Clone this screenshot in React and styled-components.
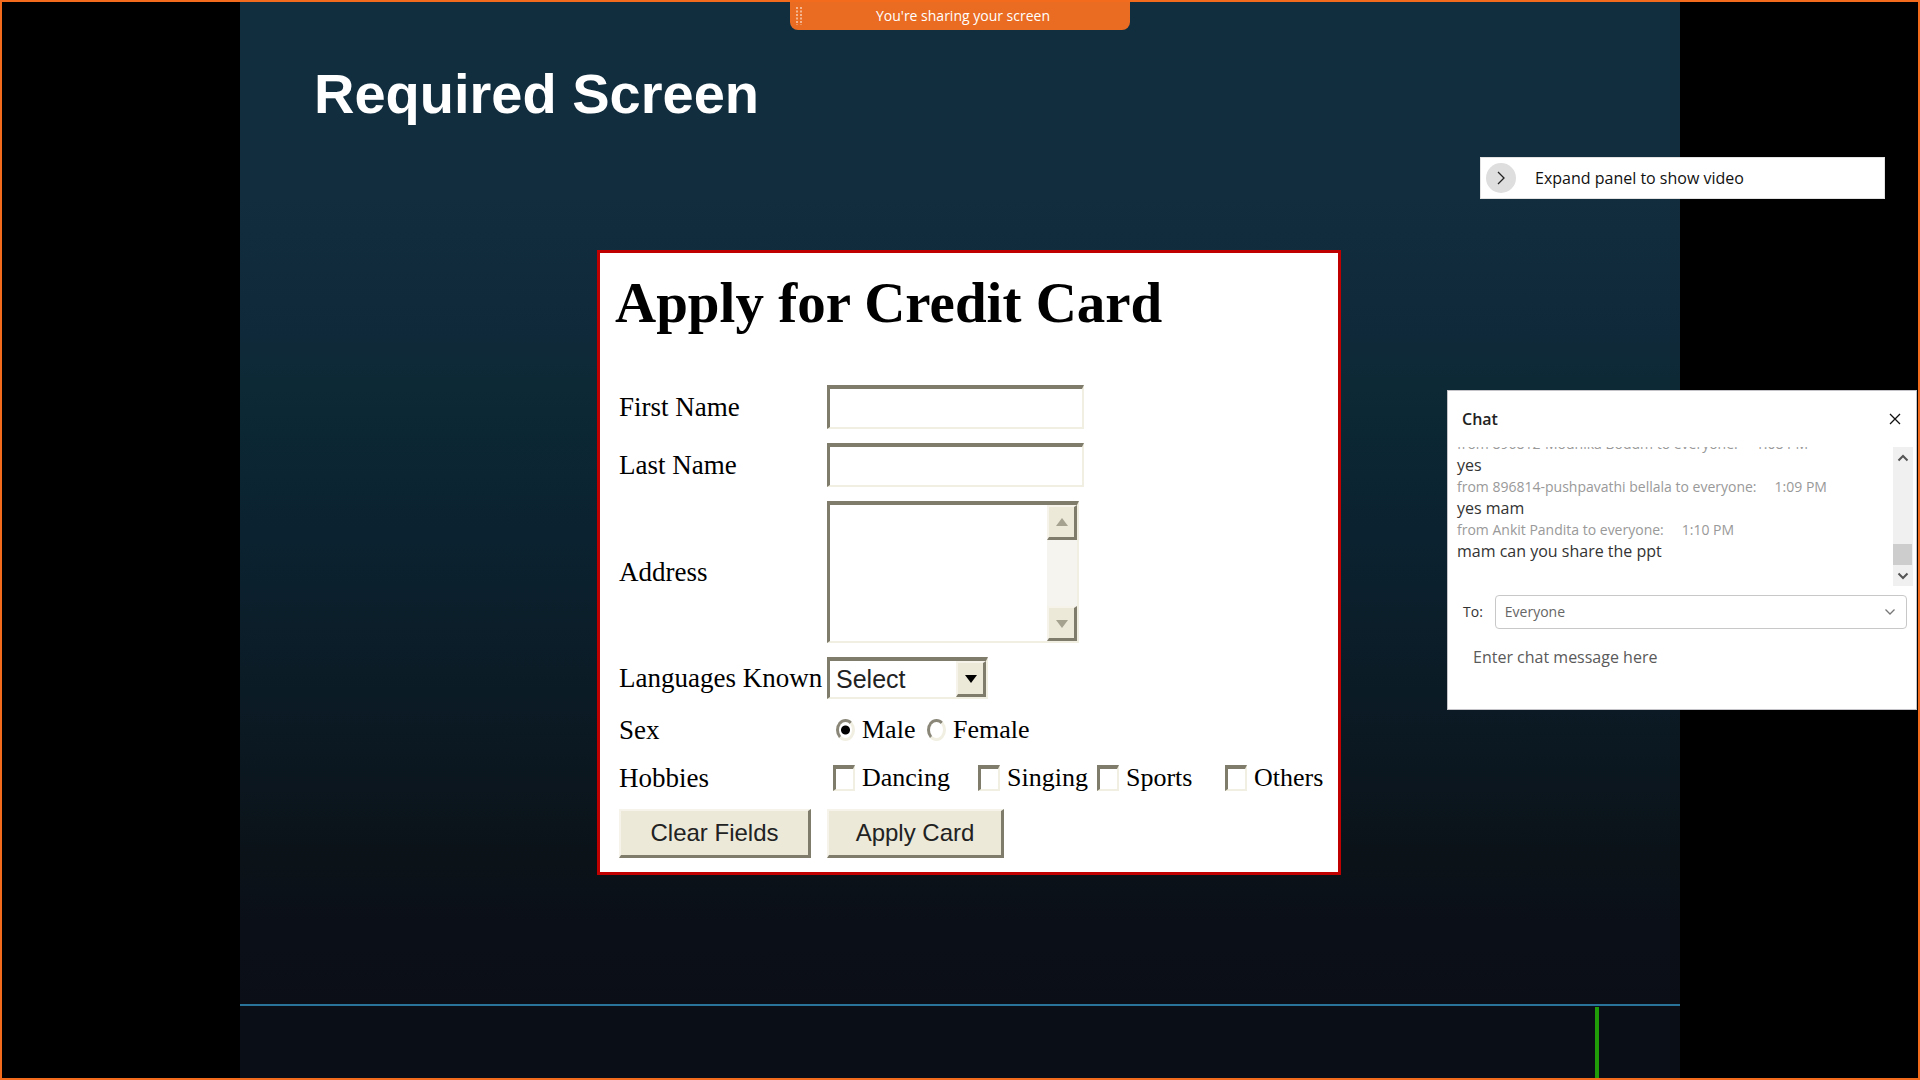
import React from "react";
import styled, { createGlobalStyle, css } from "styled-components";

const GlobalStyle = createGlobalStyle`
  *, *::before, *::after { box-sizing: border-box; }
  body { margin: 0; background: #000; }
  h1, h2, p { margin: 0; }
`;

const uiFont = css`
  font-family: "Open Sans", "Noto Sans", sans-serif;
`;

const Stage = styled.div`
  position: relative;
  display: flex;
  justify-content: center;
  min-height: 100vh;
  border: 2px solid #f36b1d;
  background: #000;
  overflow: hidden;
`;

/* ---------- slide ---------- */

const Slide = styled.main`
  display: flex;
  flex-direction: column;
  width: 75vw;
  padding-top: 60px;
  background: linear-gradient(
    #112e3f 0%,
    #112d3e 18%,
    #10293a 31%,
    #0c2935 36%,
    #0b2230 50%,
    #0b1a24 66%,
    #0b1218 80%,
    #0b0f18 88%,
    #0b0d15 100%
  );
`;

const SlideTitle = styled.h1`
  padding-left: 74px;
  color: #fff;
  font: bold 56px/64px "Liberation Sans", Arial, sans-serif;
`;

const SlideFooter = styled.footer`
  display: flex;
  justify-content: flex-end;
  height: 74px;
  margin-top: auto;
  padding: 1px 81px 0 0;
  border-top: 2px solid #29739a;
  background: #0a0e16;
`;

const GreenMark = styled.span`
  width: 4px;
  background: #209c08;
`;

/* ---------- credit card form ---------- */

const Card = styled.section`
  align-self: flex-start;
  width: 744px;
  margin: 124px 0 40px 357px;
  padding: 18px 12px 14px 15px;
  border: 3px solid #c00000;
  background: #fff;
  color: #000;
  font: 27px/32px "Liberation Serif", "Times New Roman", serif;
`;

const CardTitle = styled.h2`
  margin-bottom: 50px;
  font-size: 57px;
  line-height: 64px;
  white-space: nowrap;
`;

const Form = styled.form`
  display: grid;
  grid-template-columns: 208px 1fr;
  gap: 14px 0;
  align-items: center;
  justify-items: start;
  padding-left: 4px;
`;

const FieldLabel = styled.label`
  white-space: nowrap;
`;

const sunken = css`
  border-style: solid;
  border-width: 4px 2px 2px 3px;
  border-color: #7f7c6c #f1efe2 #f1efe2 #7f7c6c;
  background: #fff;
`;

const raised = css`
  border-style: solid;
  border-width: 2px 3px 3px 2px;
  border-color: #f6f4ea #7f7c6c #7f7c6c #f6f4ea;
  background: #ece9d8;
`;

const TextInput = styled.input`
  ${sunken}
  width: 257px;
  height: 44px;
  padding: 0 6px;
  border-radius: 0;
  outline: none;
  font: 24px "Liberation Sans", Arial, sans-serif;
`;

const AreaFrame = styled.div`
  ${sunken}
  display: flex;
  width: 252px;
  height: 142px;
`;

const Area = styled.textarea`
  flex: 1;
  min-width: 0;
  padding: 4px 6px;
  border: 0;
  outline: none;
  resize: none;
  overflow: hidden;
  font: 24px "Liberation Sans", Arial, sans-serif;
`;

const ClassicTrack = styled.div`
  display: flex;
  flex-direction: column;
  justify-content: space-between;
  width: 30px;
  background: #f5f4ee;
`;

const ClassicArrow = styled.button`
  ${raised}
  display: grid;
  place-items: center;
  height: 35px;
  padding: 0;
`;

const SelectFrame = styled.div`
  ${sunken}
  display: grid;
  width: 161px;
  height: 42px;
`;

const Select = styled.select`
  grid-area: 1 / 1;
  appearance: none;
  width: 100%;
  padding: 0 30px 0 6px;
  border: 0;
  outline: none;
  background: transparent;
  color: #222;
  font: 25px "Liberation Sans", Arial, sans-serif;
`;

const SelectArrow = styled.span`
  ${raised}
  grid-area: 1 / 1;
  display: grid;
  place-items: center;
  justify-self: end;
  width: 30px;
  pointer-events: none;
`;

const Options = styled.div`
  display: grid;
  grid-template-columns: ${(p) => p.$columns};
  align-items: center;
  height: 34px;
  padding-left: ${(p) => p.$indent};
  font-size: 26px;
`;

const Option = styled.label`
  display: flex;
  align-items: center;
  gap: 7px;
  white-space: nowrap;
`;

const Radio = styled.input`
  appearance: none;
  flex: none;
  width: 19px;
  height: 22px;
  margin: 0;
  border: 3px solid;
  border-color: #8a8778 #f1efe2 #f1efe2 #8a8778;
  border-radius: 50%;
  background: #fff;
  &:checked {
    background: radial-gradient(circle, #000 0 4px, #fff 5px);
  }
`;

const Check = styled.input`
  ${sunken}
  appearance: none;
  flex: none;
  width: 22px;
  height: 26px;
  margin: 0;
`;

const ClassicButton = styled.button`
  ${raised}
  width: ${(p) => p.$width};
  height: 49px;
  padding: 0;
  color: #222;
  font: 24px "Liberation Sans", Arial, sans-serif;
`;

/* ---------- meeting overlays ---------- */

const ShareBar = styled.div`
  ${uiFont}
  position: absolute;
  top: 0;
  left: 50%;
  display: flex;
  align-items: center;
  width: 340px;
  height: 28px;
  margin-left: -170px;
  padding: 0 6px;
  border-radius: 0 0 8px 8px;
  background: #e96c22;
  color: #fff;
  font-size: 14px;
  line-height: 20px;
`;

const ShareText = styled.span`
  flex: 1;
  text-align: center;
`;

const VideoPanel = styled.button`
  ${uiFont}
  position: absolute;
  top: 155px;
  right: 33px;
  display: flex;
  align-items: center;
  gap: 19px;
  width: 405px;
  height: 42px;
  padding: 0 5px;
  border: 1px solid #e2e2e2;
  background: #fff;
  color: #111;
  font-size: 16px;
  line-height: 22px;
`;

const Circle = styled.span`
  display: grid;
  place-items: center;
  width: 30px;
  height: 30px;
  border-radius: 50%;
  background: #dedede;
`;

const Chat = styled.aside`
  ${uiFont}
  position: absolute;
  top: 388px;
  right: 1px;
  display: flex;
  flex-direction: column;
  width: 470px;
  height: 320px;
  border: 1px solid #c4c4c8;
  background: #fff;
`;

const ChatHeader = styled.header`
  display: flex;
  align-items: center;
  justify-content: space-between;
  height: 56px;
  padding: 0 15px 0 14px;
  color: #222;
`;

const ChatTitle = styled.h2`
  font-size: 16px;
  line-height: 22px;
  font-weight: 600;
`;

const IconButton = styled.button`
  display: grid;
  place-items: center;
  padding: 0;
  border: 0;
  background: none;
`;

const ChatLog = styled.div`
  display: flex;
  height: 139px;
  padding-right: 3px;
`;

const Messages = styled.div`
  display: flex;
  flex: 1;
  flex-direction: column;
  justify-content: flex-end;
  padding: 0 9px 24px;
  overflow: hidden;
`;

const Meta = styled.p`
  display: flex;
  gap: 18px;
  color: #999;
  font-size: 14px;
  line-height: 21px;
`;

const Message = styled.p`
  color: #333;
  font-size: 16px;
  line-height: 22px;
`;

const Scrollbar = styled.div`
  display: flex;
  flex-direction: column;
  width: 20px;
  background: #f0f0f0;
`;

const ScrollButton = styled(IconButton)`
  height: 21px;
`;

const ScrollSpace = styled.div`
  display: flex;
  flex: 1;
  flex-direction: column;
  justify-content: flex-end;
`;

const ScrollThumb = styled.div`
  width: 19px;
  height: 21px;
  background: #cdcdcd;
`;

const Recipient = styled.div`
  display: flex;
  align-items: center;
  gap: 12px;
  padding: 9px 9px 0 15px;
  color: #333;
  font-size: 14px;
  line-height: 20px;
`;

const RecipientBox = styled.div`
  display: grid;
  flex: 1;
  align-items: center;
  height: 34px;
  border: 1px solid #c8c8c8;
  border-radius: 4px;
`;

const RecipientSelect = styled.select`
  ${uiFont}
  grid-area: 1 / 1;
  appearance: none;
  padding: 0 36px 0 9px;
  border: 0;
  outline: none;
  background: none;
  color: #666;
  font-size: 14px;
  line-height: 20px;
`;

const RecipientArrow = styled.svg`
  grid-area: 1 / 1;
  justify-self: end;
  margin-right: 10px;
  pointer-events: none;
`;

const MessageBox = styled.textarea`
  ${uiFont}
  flex: 1;
  padding: 17px 25px;
  border: 0;
  outline: none;
  resize: none;
  background: none;
  color: #333;
  font-size: 16px;
  line-height: 22px;
  &::placeholder { color: #5a5a5a; opacity: 1; }
`;

const Triangle = ({ up, color }) => (
  <svg width="14" height="9" viewBox="0 0 14 9" aria-hidden="true">
    <path d={up ? "M7 0L13 8H1z" : "M1 1H13L7 9z"} fill={color} />
  </svg>
);

const Chevron = ({ up }) => (
  <svg width="12" height="8" viewBox="0 0 12 8" aria-hidden="true">
    <path d={up ? "M1.5 6.5L6 2L10.5 6.5" : "M1.5 1.5L6 6L10.5 1.5"} fill="none" stroke="#555" strokeWidth="2" />
  </svg>
);

const hobbies = ["Dancing", "Singing", "Sports", "Others"];

const log = [
  { from: "896812-Mounika Boddm", time: "1:08 PM", text: "yes" },
  { from: "896814-pushpavathi bellala", time: "1:09 PM", text: "yes mam" },
  { from: "Ankit Pandita", time: "1:10 PM", text: "mam can you share the ppt" },
];

export default function App() {
  return (
    <Stage>
      <GlobalStyle />
      <Slide>
        <SlideTitle>Required Screen</SlideTitle>
        <Card>
          <CardTitle>Apply for Credit Card</CardTitle>
          <Form onSubmit={(e) => e.preventDefault()}>
            <FieldLabel htmlFor="first">First Name</FieldLabel>
            <TextInput id="first" type="text" />
            <FieldLabel htmlFor="last">Last Name</FieldLabel>
            <TextInput id="last" type="text" />
            <FieldLabel htmlFor="address">Address</FieldLabel>
            <AreaFrame>
              <Area id="address" />
              <ClassicTrack>
                <ClassicArrow type="button" disabled aria-label="Scroll up">
                  <Triangle up color="#a5a28f" />
                </ClassicArrow>
                <ClassicArrow type="button" disabled aria-label="Scroll down">
                  <Triangle color="#a5a28f" />
                </ClassicArrow>
              </ClassicTrack>
            </AreaFrame>
            <FieldLabel htmlFor="language">Languages Known</FieldLabel>
            <SelectFrame>
              <Select id="language">
                <option>Select</option>
              </Select>
              <SelectArrow>
                <Triangle color="#000" />
              </SelectArrow>
            </SelectFrame>
            <span id="sex">Sex</span>
            <Options role="radiogroup" aria-labelledby="sex" $columns="91px auto" $indent="9px">
              <Option>
                <Radio type="radio" name="sex" defaultChecked />
                Male
              </Option>
              <Option>
                <Radio type="radio" name="sex" />
                Female
              </Option>
            </Options>
            <span id="hobbies">Hobbies</span>
            <Options role="group" aria-labelledby="hobbies" $columns="145px 119px 128px auto" $indent="6px">
              {hobbies.map((name) => (
                <Option key={name}>
                  <Check type="checkbox" />
                  {name}
                </Option>
              ))}
            </Options>
            <ClassicButton type="reset" $width="192px">Clear Fields</ClassicButton>
            <ClassicButton type="submit" $width="177px">Apply Card</ClassicButton>
          </Form>
        </Card>
        <SlideFooter>
          <GreenMark />
        </SlideFooter>
      </Slide>

      <ShareBar>
        <svg width="6" height="18" viewBox="0 0 6 18" aria-hidden="true">
          <path d="M1 0V18M5 0V18" stroke="#fff" strokeWidth="1" strokeDasharray="2 1.5" />
        </svg>
        <ShareText>You're sharing your screen</ShareText>
      </ShareBar>

      <VideoPanel type="button">
        <Circle>
          <svg width="10" height="14" viewBox="0 0 10 14" aria-hidden="true">
            <path d="M2 1L8 7L2 13" fill="none" stroke="#222" strokeWidth="1.3" />
          </svg>
        </Circle>
        Expand panel to show video
      </VideoPanel>

      <Chat>
        <ChatHeader>
          <ChatTitle>Chat</ChatTitle>
          <IconButton type="button" aria-label="Close chat">
            <svg width="12" height="12" viewBox="0 0 12 12" aria-hidden="true">
              <path d="M1 1L11 11M11 1L1 11" stroke="#111" strokeWidth="1.3" />
            </svg>
          </IconButton>
        </ChatHeader>
        <ChatLog>
          <Messages>
            {log.map((m) => (
              <React.Fragment key={m.time}>
                <Meta>
                  <span>from {m.from} to everyone:</span>
                  <span>{m.time}</span>
                </Meta>
                <Message>{m.text}</Message>
              </React.Fragment>
            ))}
          </Messages>
          <Scrollbar>
            <ScrollButton type="button" aria-label="Scroll up">
              <Chevron up />
            </ScrollButton>
            <ScrollSpace>
              <ScrollThumb />
            </ScrollSpace>
            <ScrollButton type="button" aria-label="Scroll down">
              <Chevron />
            </ScrollButton>
          </Scrollbar>
        </ChatLog>
        <Recipient>
          <label htmlFor="to">To:</label>
          <RecipientBox>
            <RecipientSelect id="to">
              <option>Everyone</option>
            </RecipientSelect>
            <RecipientArrow width="12" height="8" viewBox="0 0 12 8" aria-hidden="true">
              <path d="M1.5 1.5L6 6L10.5 1.5" fill="none" stroke="#777" strokeWidth="1.3" />
            </RecipientArrow>
          </RecipientBox>
        </Recipient>
        <MessageBox aria-label="Chat message" placeholder="Enter chat message here" />
      </Chat>
    </Stage>
  );
}
